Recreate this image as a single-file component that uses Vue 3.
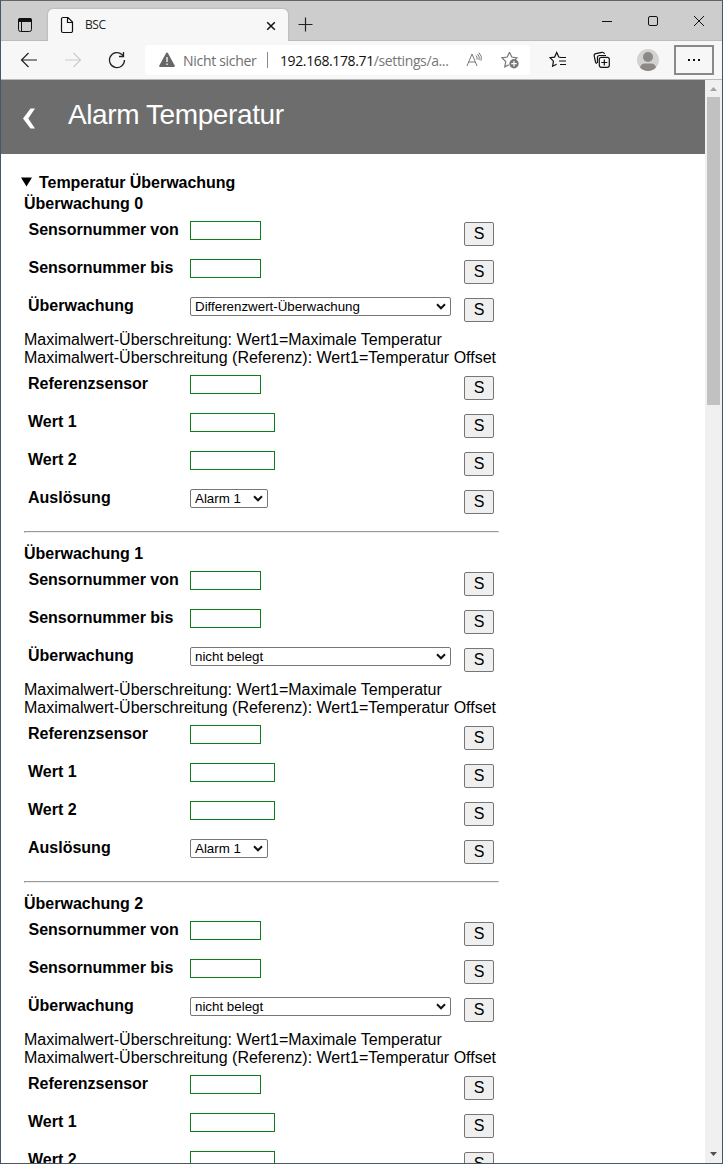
<script setup>
const monitors = [
  { id: 0, mode: 'Differenzwert-Überwachung' },
  { id: 1, mode: 'nicht belegt' },
  { id: 2, mode: 'nicht belegt' },
]
const sensorRows = [
  { label: 'Sensornummer von', kind: 'short', wide: true },
  { label: 'Sensornummer bis', kind: 'short', wide: true },
  { label: 'Überwachung', kind: 'mode' },
]
const valueRows = [
  { label: 'Referenzsensor', kind: 'short' },
  { label: 'Wert 1', kind: 'long' },
  { label: 'Wert 2', kind: 'long' },
  { label: 'Auslösung', kind: 'alarm' },
]
const parts = [sensorRows, valueRows]
</script>

<template>
  <div class="window">
    <div class="tabbar">
      <svg class="tabmenu" width="16" height="16" viewBox="0 0 16 16">
        <rect x="1.5" y="1.5" width="13" height="13" rx="2" fill="none" stroke="#111" />
        <path d="M1 5V3a2 2 0 0 1 2-2h10a2 2 0 0 1 2 2v2z" fill="#111" />
        <path d="M4.5 5v9" stroke="#111" />
      </svg>
      <div class="tab">
        <svg width="14" height="18" viewBox="0 0 14 18" fill="none" stroke="#111" stroke-width="1.2">
          <path d="M3 1.5h5l4.5 4.5v9a1.5 1.5 0 0 1-1.5 1.5H3A1.500 1.500 0 0 1 1.500 15V3A1.500 1.500 0 0 1 3 1.500zM7.500 1.500v5h5" />
        </svg>
        <span class="tabtitle">BSC</span>
        <svg class="tabclose" width="10" height="10" viewBox="0 0 10 10"><path d="M1.200 1.200l7.600 7.600M8.800 1.200L1.200 8.800" stroke="#111" stroke-width="1.500" /></svg>
      </div>
      <svg class="plus" width="15" height="15" viewBox="0 0 15 15"><path d="M7.500 .5v14M.5 7.500h14" stroke="#222" stroke-width="1.200" /></svg>
      <div class="winbtns">
        <svg width="12" height="12" viewBox="0 0 12 12"><path d="M1 6.500h10" stroke="#111" /></svg>
        <svg width="12" height="12" viewBox="0 0 12 12"><rect x="1.500" y="1.500" width="9" height="9" rx="1.500" fill="none" stroke="#111" /></svg>
        <svg width="12" height="12" viewBox="0 0 12 12"><path d="M1 1l10 10M11 1L1 11" stroke="#111" /></svg>
      </div>
    </div>

    <div class="toolbar">
      <svg class="back" width="18" height="16" viewBox="0 0 18 16"><path d="M17 8H1.500M8.500 1L1.500 8l7 7" fill="none" stroke="#222" stroke-width="1.200" /></svg>
      <svg class="forward" width="18" height="16" viewBox="0 0 18 16"><path d="M1 8h15.500M9.500 1l7 7-7 7" fill="none" stroke="#ccc" stroke-width="1.200" /></svg>
      <svg class="reload" width="18" height="18" viewBox="0 0 18 18"><path d="M16.500 9A7.500 7.500 0 1 1 14 3.500l1.500 1.500M15.500 1v4.500H11" fill="none" stroke="#222" stroke-width="1.300" /></svg>
      <div class="address">
        <svg width="16" height="16" viewBox="0 0 16 16">
          <path d="M7 1.200a1.150 1.150 0 0 1 2 0l6.700 12.200a1.100 1.100 0 0 1-1 1.600H1.300a1.100 1.100 0 0 1-1-1.600z" fill="#666" />
          <path d="M8 5v5M8 11.500V13" stroke="#fff" stroke-width="1.300" />
        </svg>
        <span class="insecure">Nicht sicher</span>
        <span class="sep"></span>
        <span class="url">192.168.178.71<i>/settings/a...</i></span>
        <svg class="read" width="17" height="16" viewBox="0 0 17 16" fill="none" stroke="#777">
          <path d="M1 14L6 2l5 12M2.800 10h6.500M10 3.500q1.500 1.500 1 4M11.500 2q2.500 2.500 1.500 6M13 .7q3.500 3.500 2 8" />
        </svg>
        <svg class="fav" width="19" height="18" viewBox="0 0 19 18">
          <path d="M8.500 1.300l2.300 4.700 5.200.8-3.700 3.600M8.500 1.300L6.200 6 1 6.800l3.700 3.700-.9 5.300 4-2.100" fill="none" stroke="#777" stroke-width="1.200" />
          <circle cx="13" cy="12.700" r="4.700" fill="#777" /><path d="M13 10v5.400M10.300 12.700h5.400" stroke="#fff" stroke-width="1.200" />
        </svg>
      </div>
      <svg class="favs" width="18" height="18" viewBox="0 0 18 18" fill="none" stroke="#111" stroke-width="1.200">
        <path d="M12 6.500L9.800 6 7.700 1.500 5.600 6.100 1 6.700l3.400 3.400-.8 5.200 4-2M11 6.500h6M10 10h7M11 13.500h6" />
      </svg>
      <svg class="coll" width="18" height="18" viewBox="0 0 18 18" fill="none" stroke="#111" stroke-width="1.200">
        <path d="M4 12.500A2 2 0 0 1 2.500 11L1.200 5A2 2 0 0 1 2.700 2.700L9 1.300A2 2 0 0 1 11.400 3" />
        <path d="M4.500 12V6a2 2 0 0 1 2-1.500H13" /><rect x="6.300" y="6.300" width="10" height="10" rx="2" /><path d="M11.300 8.500v6M8.300 11.500h6" />
      </svg>
      <svg class="avatar" width="22" height="22" viewBox="0 0 22 22">
        <circle cx="11" cy="11" r="11" fill="#d4d2d0" /><circle cx="11" cy="8" r="5" fill="#8b8886" />
        <path d="M3 18.500Q4 14.500 8 14.500h6q4 0 5 4A11 11 0 0 1 3 18.500z" fill="#8b8886" />
      </svg>
      <div class="more"><b></b><b></b><b></b></div>
    </div>

    <div class="viewport">
      <main class="page">
        <header class="head">
          <svg width="14" height="22" viewBox="0 0 14 22"><path d="M8.500 .5H13L6.300 10.500 13 20.500H8.500L1 10.500z" fill="#fff" /></svg>
          <h1>Alarm Temperatur</h1>
        </header>
        <div class="content">
          <div class="summary">
            <svg width="11" height="10" viewBox="0 0 11 10"><path d="M0 .5h11L5.500 9.500z" /></svg>
            <span>Temperatur Überwachung</span>
          </div>
          <section v-for="m in monitors" :key="m.id" class="monitor">
            <div class="title">Überwachung {{ m.id }}</div>
            <template v-for="(rows, p) in parts" :key="p">
              <div v-if="p === 1" class="hint">Maximalwert-Überschreitung: Wert1=Maximale Temperatur<br />Maximalwert-Überschreitung (Referenz): Wert1=Temperatur Offset</div>
              <div v-for="r in rows" :key="r.label" class="row">
                <label :class="{ wide: r.wide }">{{ r.label }}</label>
                <div class="field">
                  <div v-if="r.kind === 'mode' || r.kind === 'alarm'" class="select" :class="r.kind">
                    <span>{{ r.kind === 'mode' ? m.mode : 'Alarm 1' }}</span>
                    <svg width="10" height="7" viewBox="0 0 10 7"><path d="M1 1.300l4 4 4-4" fill="none" stroke="#111" stroke-width="2" /></svg>
                  </div>
                  <input v-else type="text" :class="r.kind" />
                </div>
                <button>S</button>
              </div>
            </template>
            <div class="rule"></div>
          </section>
        </div>
      </main>
      <div class="scroll">
        <svg width="7" height="4" viewBox="0 0 7 4"><path d="M0 4L3.500 0 7 4z" fill="#a3a3a3" /></svg>
        <div class="thumb"></div>
        <svg class="down" width="7" height="4" viewBox="0 0 7 4"><path d="M0 0h7L3.500 4z" fill="#505050" /></svg>
      </div>
    </div>
  </div>
</template>

<style>
html, body { margin: 0; overflow: hidden; }
</style>

<style scoped>
* { box-sizing: border-box; }
svg { display: block; flex: none; }
.window { width: 723px; height: 1164px; border: 1px solid #44586c; border-top-color: #646466; display: flex; flex-direction: column; background: #fff; overflow: hidden; font-family: "Liberation Sans", Arial, sans-serif; color: #000; }
.tabbar { height: 40px; flex: none; background: #cdcdcd; border-bottom: 1px solid #bcbcbc; display: flex; padding-left: 16px; }
.tabmenu { margin-top: 16px; }
.tab { width: 240px; height: 32px; margin: 8px 0 0 15px; background: #f7f7f7; border-radius: 5px 5px 0 0; box-shadow: 0 0 2px #999; clip-path: inset(-3px -3px 0 -3px); display: flex; padding: 7px 12px 0 12px; font-family: "Open Sans", sans-serif; }
.tabtitle { margin: 1px 0 0 11px; font-size: 12px; line-height: 16px; letter-spacing: -.4px; color: #222; }
.tabclose { margin: 5px 0 0 auto; }
.plus { margin: 16px 0 0 10px; }
.winbtns { margin: 14px 17px 0 auto; display: flex; gap: 34px; }
.toolbar { height: 39px; flex: none; background: #f7f7f7; border-bottom: 1px solid #b9b9b9; display: flex; align-items: center; }
.back { margin-left: 19px; }
.forward { margin-left: 26px; }
.reload { margin-left: 26px; }
.address { width: 385px; height: 30px; margin-left: 19px; border-radius: 4px; background: #fff; display: flex; align-items: center; padding-left: 14px; font: 14px "Open Sans", sans-serif; color: #6e6e6e; }
.insecure { width: 72px; margin-left: 8px; letter-spacing: -.3px; white-space: nowrap; }
.sep { width: 1px; height: 16px; background: #888; margin-left: 12px; }
.url { width: 170px; margin-left: 12px; color: #111; white-space: nowrap; letter-spacing: -.38px; }
.url i { font-style: normal; color: #777; }
.read { margin-left: 16px; }
.fav { margin-left: 18px; }
.favs { margin-left: 19px; }
.coll { margin-left: 26px; }
.avatar { margin-left: 26px; }
.more { width: 40px; height: 30px; margin-left: 15px; border: 2px solid #898989; display: flex; align-items: center; justify-content: center; gap: 3px; }
.more b { width: 2px; height: 2px; background: #111; }
.viewport { flex: 1; min-height: 0; display: flex; }
.page { flex: 1; overflow: hidden; }
.head { height: 74px; background: #6d6d6d; display: flex; color: #fff; }
.head svg { margin: 28px 0 0 21px; }
.head h1 { margin: 17px 0 0 32px; font-size: 28px; font-weight: 400; line-height: 36px; letter-spacing: -.4px; white-space: nowrap; }
.content { width: 475px; margin: 20px 0 0 23px; font-size: 16px; line-height: 18px; }
.summary { display: flex; height: 20px; margin-left: -3px; font-weight: 700; }
.summary span { letter-spacing: -.04px; }
.summary svg { margin: 3px 7px 0 0; }
.monitor { height: 350px; }
.title { height: 22px; padding-top: 1px; font-weight: 700; }
.row { height: 38px; display: grid; grid-template-columns: 166px 274px 30px; font-weight: 700; }
label { padding: 5px 0 0 4px; white-space: nowrap; }
label.wide { padding-left: 4.5px; }
.field { padding-top: 5px; font-weight: 400; }
input { display: block; width: 71px; height: 19px; border: 1px solid #0b7d1b; background: #fff; padding: 0; margin: 0; }
input.long { width: 85px; }
.select { width: 261px; height: 19px; border: 1px solid #767676; border-radius: 2px; display: flex; justify-content: space-between; align-items: center; padding: 0 4px; font-size: 13.333px; line-height: 17px; white-space: nowrap; }
.select.alarm { width: 78px; }
button { width: 30px; height: 24px; margin: 6px 0 0; padding: 0; border: 1px solid #767676; border-radius: 2px; background: #efefef; font: 16px/20px "Liberation Sans", Arial, sans-serif; color: #000; }
.hint { height: 40px; padding-top: 1px; white-space: nowrap; }
.rule { height: 2px; margin-top: 9px; border: 1px solid #999; border-bottom-color: #eee; border-right-color: #eee; }
.scroll { width: 17px; background: #f0f0f0; display: flex; flex-direction: column; align-items: center; padding-top: 7px; }
.thumb { width: 13px; height: 308px; margin-top: 6px; background: #c1c1c1; }
.down { margin: auto 0 7px; }
</style>
